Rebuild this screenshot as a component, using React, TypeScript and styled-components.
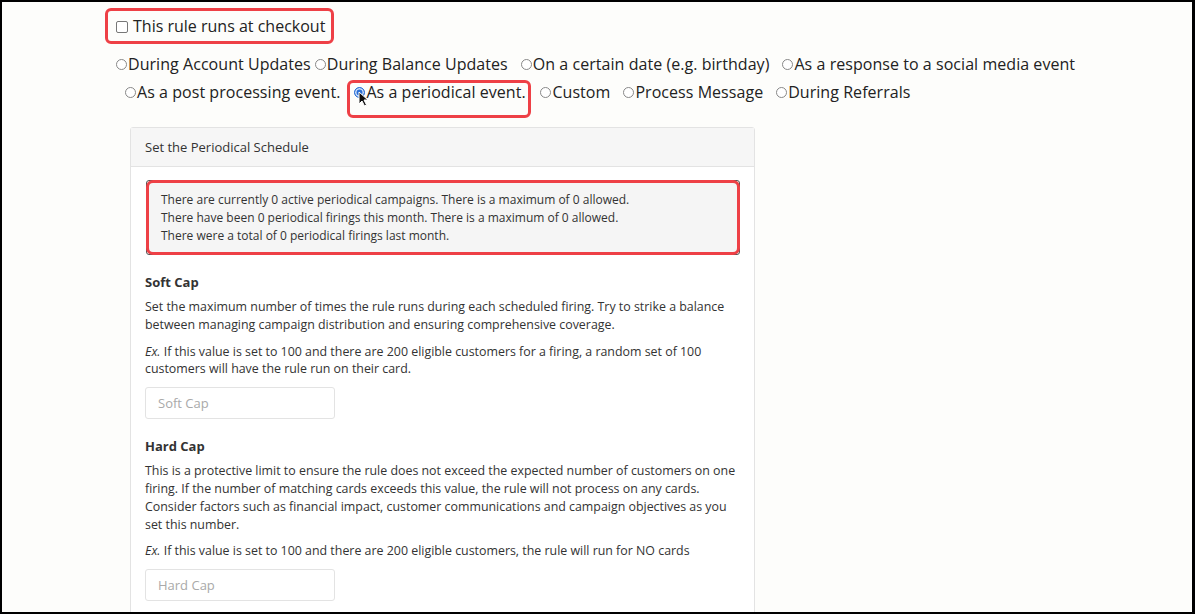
import React from "react";
import styled, { createGlobalStyle } from "styled-components";

const GlobalStyle = createGlobalStyle`
  html, body {
    margin: 0;
    padding: 0;
    background: #000;
  }
  body {
    font-family: "Open Sans", "Noto Sans", Arial, sans-serif;
    color: #222;
  }
`;

const RED = "#ee4046";

const topOptions = [
  "During Account Updates",
  "During Balance Updates",
  "On a certain date (e.g. birthday)",
  "As a response to a social media event",
];

const bottomOptions = [
  { label: "As a post processing event." },
  { label: "As a periodical event.", checked: true },
  { label: "Custom" },
  { label: "Process Message" },
  { label: "During Referrals" },
];

function Cursor() {
  return (
    <CursorIcon width="11" height="16" viewBox="0 0 11 16">
      <path
        d="M1 1 L1 13 L4 10 L6.5 15 L8.5 14 L6 9 L10 9 Z"
        fill="#111"
        stroke="#fff"
        strokeWidth="1"
        strokeLinejoin="round"
      />
    </CursorIcon>
  );
}

function App() {
  return (
    <>
      <GlobalStyle />
      <Frame>
        <CheckoutBox>
          <Checkbox />
          <span>This rule runs at checkout</span>
        </CheckoutBox>

        <RadioRow $indent={114} $top={6}>
          {topOptions.map((label, i) => (
            <RadioLabel key={label} $gap={i === 0 ? 0 : i === 1 ? 4 : 13}>
              <Radio />
              {label}
            </RadioLabel>
          ))}
        </RadioRow>
        <RadioRow $indent={123} $top={0}>
          {bottomOptions.map((opt, i) =>
            opt.checked ? (
              <Highlight key={opt.label}>
                <RadioLabel $gap={0}>
                  <Radio $checked>
                    <Cursor />
                  </Radio>
                  {opt.label}
                </RadioLabel>
              </Highlight>
            ) : (
              <RadioLabel key={opt.label} $gap={i === 0 ? 0 : i === 2 ? 9 : 13}>
                <Radio />
                {opt.label}
              </RadioLabel>
            )
          )}
        </RadioRow>

        <Panel>
          <PanelHeading>Set the Periodical Schedule</PanelHeading>
          <PanelBody>
            <Well>
              <div>There are currently 0 active periodical campaigns. There is a maximum of 0 allowed.</div>
              <div>There have been 0 periodical firings this month. There is a maximum of 0 allowed.</div>
              <div>There were a total of 0 periodical firings last month.</div>
            </Well>

            <FieldTitle>Soft Cap</FieldTitle>
            <Help>
              Set the maximum number of times the rule runs during each scheduled firing. Try to strike a balance
              between managing campaign distribution and ensuring comprehensive coverage.
            </Help>
            <Help>
              <em>Ex.</em> If this value is set to 100 and there are 200 eligible customers for a firing, a random set of 100
              customers will have the rule run on their card.
            </Help>
            <CapInput placeholder="Soft Cap" />

            <FieldTitle>Hard Cap</FieldTitle>
            <Help>
              This is a protective limit to ensure the rule does not exceed the expected number of customers on one
              firing. If the number of matching cards exceeds this value, the rule will not process on any cards.
              Consider factors such as financial impact, customer communications and campaign objectives as you
              set this number.
            </Help>
            <Help>
              <em>Ex.</em> If this value is set to 100 and there are 200 eligible customers, the rule will run for NO cards
            </Help>
            <CapInput placeholder="Hard Cap" />
          </PanelBody>
        </Panel>
      </Frame>
    </>
  );
}

export default App;

const Frame = styled.div`
  box-sizing: border-box;
  width: 1195px;
  height: 614px;
  overflow: hidden;
  background: #fdfdfb;
  border-style: solid;
  border-color: #000;
  border-width: 2px 3px 2px 2px;
  display: flex;
  flex-direction: column;
  align-items: flex-start;
`;

const CheckoutBox = styled.label`
  box-sizing: border-box;
  flex-shrink: 0;
  margin: 6px 0 0 103px;
  width: 229px;
  height: 36px;
  border: 3px solid ${RED};
  border-radius: 6px;
  display: flex;
  align-items: center;
  gap: 5px;
  padding-left: 8px;
  font-size: 16px;
  white-space: nowrap;
  color: #222;
`;

const Checkbox = styled.span`
  box-sizing: border-box;
  width: 12px;
  height: 12px;
  border: 1px solid #777;
  border-radius: 2px;
  background: #fff;
  margin-top: 1px;
`;

const RadioRow = styled.div<{ $indent: number; $top: number }>`
  flex-shrink: 0;
  display: flex;
  align-items: center;
  height: 28px;
  margin-top: ${({ $top }) => $top}px;
  padding-left: ${({ $indent }) => $indent}px;
  font-size: 16px;
  line-height: 18px;
  letter-spacing: 0.05px;
  color: #222;
`;

const RadioLabel = styled.label<{ $gap: number }>`
  display: flex;
  align-items: center;
  margin-left: ${({ $gap }) => $gap}px;
  white-space: nowrap;
`;

const Radio = styled.span<{ $checked?: boolean }>`
  position: relative;
  box-sizing: border-box;
  width: 11px;
  height: 11px;
  border-radius: 50%;
  margin-right: 1px;
  border: 1px solid ${({ $checked }) => ($checked ? "#2a6fd6" : "#888")};
  background: ${({ $checked }) => ($checked ? "#2a6fd6" : "#fff")};
  box-shadow: ${({ $checked }) => ($checked ? "inset 0 0 0 1.5px #cfe0fa" : "none")};
`;

const CursorIcon = styled.svg`
  position: absolute;
  left: 3px;
  top: 3px;
`;

const Highlight = styled.div`
  box-sizing: border-box;
  align-self: flex-start;
  margin: 2px 0 0 7px;
  width: 184px;
  height: 38px;
  flex-shrink: 0;
  border: 3px solid ${RED};
  border-radius: 6px;
  display: flex;
  align-items: flex-start;
  padding: 0 0 0 4px;
`;

const Panel = styled.section`
  box-sizing: border-box;
  flex-shrink: 0;
  margin: 21px 0 0 128px;
  width: 625px;
  border: 1px solid #e3e3e3;
  border-radius: 3px;
  background: #fff;
  font-size: 12px;
  color: #333;
`;

const PanelHeading = styled.div`
  height: 38px;
  display: flex;
  align-items: center;
  padding-left: 14px;
  font-size: 13px;
  background: #f6f6f6;
  border-bottom: 1px solid #e3e3e3;
`;

const PanelBody = styled.div`
  padding: 13px 12px 14px 14px;
`;

const Well = styled.div`
  position: relative;
  box-sizing: border-box;
  margin: 0 2px 0 1px;
  height: 75px;
  padding: 10px 14px;
  background: #f5f5f5;
  border: 1px solid #555;
  border-radius: 3px;
  line-height: 18px;
  &::after {
    content: "";
    position: absolute;
    inset: -1px;
    border: 3px solid ${RED};
    border-radius: 7px;
  }
`;

const FieldTitle = styled.div`
  font-size: 13px;
  font-weight: 700;
  margin: 18px 0 7px;
  line-height: 18px;
`;

const Help = styled.p`
  margin: 0 0 9px;
  font-size: 12.4px;
  line-height: 17.8px;
`;

const CapInput = styled.input`
  box-sizing: border-box;
  display: block;
  width: 190px;
  height: 32px;
  margin-top: 8px;
  padding: 0 12px;
  border: 1px solid #e3e3e3;
  border-radius: 3px;
  font-family: inherit;
  font-size: 13px;
  background: #fff;
  &::placeholder {
    color: #a9a9a9;
  }
`;
